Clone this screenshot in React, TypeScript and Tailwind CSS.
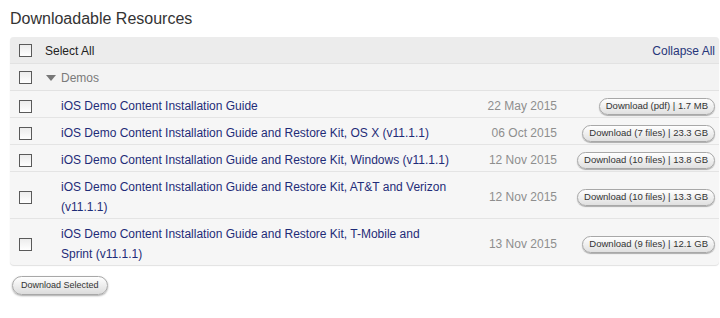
type Resource = {
  title: string;
  date: string;
  download: string;
};

const resources: Resource[] = [
  {
    title: "iOS Demo Content Installation Guide",
    date: "22 May 2015",
    download: "Download (pdf) | 1.7 MB",
  },
  {
    title: "iOS Demo Content Installation Guide and Restore Kit, OS X (v11.1.1)",
    date: "06 Oct 2015",
    download: "Download (7 files) | 23.3 GB",
  },
  {
    title: "iOS Demo Content Installation Guide and Restore Kit, Windows (v11.1.1)",
    date: "12 Nov 2015",
    download: "Download (10 files) | 13.8 GB",
  },
  {
    title: "iOS Demo Content Installation Guide and Restore Kit, AT&T and Verizon (v11.1.1)",
    date: "12 Nov 2015",
    download: "Download (10 files) | 13.3 GB",
  },
  {
    title: "iOS Demo Content Installation Guide and Restore Kit, T-Mobile and Sprint (v11.1.1)",
    date: "13 Nov 2015",
    download: "Download (9 files) | 12.1 GB",
  },
];

function Checkbox() {
  return (
    <span className="block w-[13px] h-[13px] border border-[#5a5a5a] bg-gradient-to-b from-[#ececec] to-white shrink-0" />
  );
}

function PillButton({ label, big }: { label: string; big?: boolean }) {
  return (
    <button
      className={
        big
          ? "h-[19px] px-[8px] rounded-full border border-[#a8a8a8] bg-gradient-to-b from-white to-[#dcdcdc] shadow-[0_1px_2px_rgba(0,0,0,0.35)] text-[9px] leading-none text-[#333]"
          : "h-[17px] px-[6px] rounded-full border border-[#a8a8a8] bg-gradient-to-b from-white to-[#e0e0e0] shadow-[0_1px_1px_rgba(0,0,0,0.3)] text-[9.5px] leading-none text-[#333] whitespace-nowrap"
      }
    >
      {label}
    </button>
  );
}

export default function App() {
  return (
    <div className="w-[720px] h-[318px] bg-white font-['Liberation_Sans',Arial,sans-serif] text-[12px] text-[#222]">
      <h2 className="pl-[10px] pt-[9px] text-[16px] leading-[20px] text-[#333]">
        Downloadable Resources
      </h2>

      <div className="ml-[10px] mr-[1px] mt-[8px] rounded-[4px] overflow-hidden bg-[#f6f6f6] shadow-[0_1px_1px_rgba(0,0,0,0.12)]">
        {/* header */}
        <div className="flex items-center h-[27px] pt-[1px] bg-[#ececec] border-b border-[#e2e2e2] pl-[9px] pr-[4px]">
          <Checkbox />
          <span className="ml-[13px] flex-1">Select All</span>
          <span className="text-[#26357a]">Collapse All</span>
        </div>

        {/* group */}
        <div className="flex items-center h-[27px] pt-[1px] bg-[#f3f3f3] border-b border-[#e2e2e2] pl-[9px]">
          <Checkbox />
          <span className="ml-[14px] w-0 h-0 border-l-[5px] border-r-[5px] border-t-[6px] border-l-transparent border-r-transparent border-t-[#777]" />
          <span className="ml-[5px] text-[#7a7a7a]">Demos</span>
        </div>

        {resources.map((r, i) => (
          <div
            key={r.title}
            className={
              "flex items-center pt-[5px] pb-[1px] pl-[9px] pr-[4px] " +
              (i < resources.length - 1 ? "border-b border-[#e4e4e4]" : "pb-[1px]")
            }
          >
            <Checkbox />
            <span className="ml-[29px] w-[391px] leading-[20px] text-[#1f2c78]">
              {r.title}
            </span>
            <span className="w-[105px] text-right text-[#8e8e8e] leading-[20px]">
              {r.date}
            </span>
            <span className="flex-1 flex justify-end">
              <PillButton label={r.download} />
            </span>
          </div>
        ))}
      </div>

      <div className="pl-[12px] pt-[10px]">
        <PillButton label="Download Selected" big />
      </div>
    </div>
  );
}
